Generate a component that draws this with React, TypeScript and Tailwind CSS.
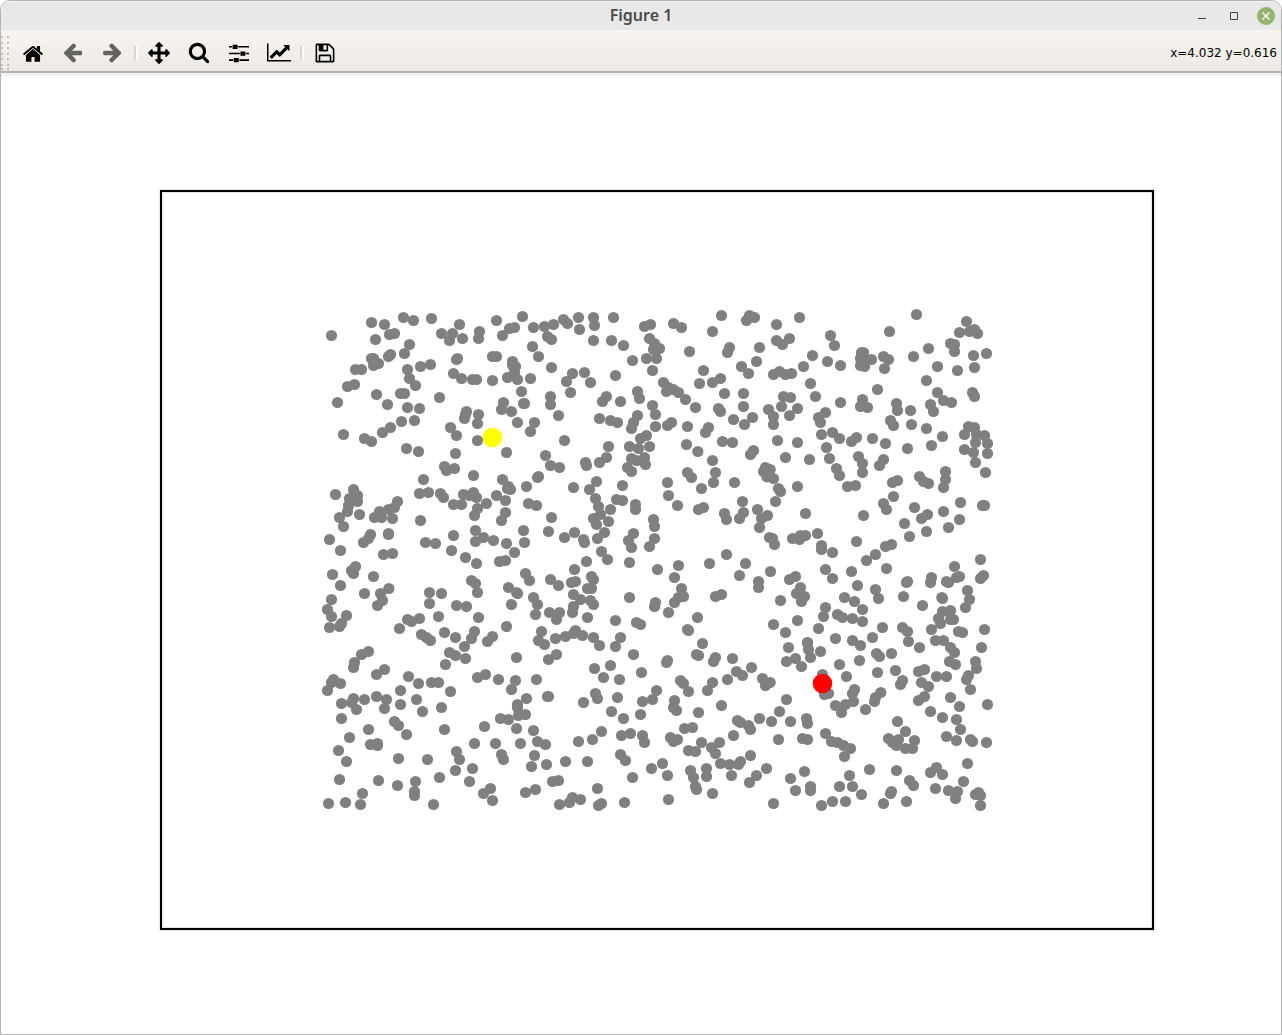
import React from 'react';

type IconProps = { d: string; box: string; className: string };

const HOME =
  'M1472 992v480q0 26-19 45t-45 19h-384v-384h-256v384h-384q-26 0-45-19t-19-45v-480q0-1 .5-3t.5-3l575-474 575 474q1 2 1 6zm223-69l-62 74q-8 9-21 11h-3q-13 0-21-7l-692-577-692 577q-12 8-24 7-13-2-21-11l-62-74q-8-10-7-23.5t11-21.5l719-599q32-26 76-26t76 26l244 204v-195q0-14 9-23t23-9h192q14 0 23 9t9 23v408l219 182q10 8 11 21.5t-7 23.5z';
const ARROW =
  'M1664 896v128q0 53-32.5 90.5t-84.5 37.5h-704l293 294q38 36 38 90t-38 90l-75 76q-37 37-90 37-52 0-91-37l-651-652q-37-37-37-90 0-52 37-91l651-650q38-38 91-38 52 0 90 38l75 74q38 38 38 91t-38 91l-293 293h704q52 0 84.5 37.5t32.5 90.5z';
const MOVE =
  'M1792 896q0 26-19 45l-256 256q-19 19-45 19t-45-19-19-45v-128h-384v384h128q26 0 45 19t19 45-19 45l-256 256q-19 19-45 19t-45-19l-256-256q-19-19-19-45t19-45 45-19h128v-384h-384v128q0 26-19 45t-45 19-45-19l-256-256q-19-19-19-45t19-45l256-256q19-19 45-19t45 19 19 45v128h384v-384h-128q-26 0-45-19t-19-45 19-45l256-256q19-19 45-19t45 19l256 256q19 19 19 45t-19 45-45 19h-128v384h384v-128q0-26 19-45t45-19 45 19l256 256q19 19 19 45z';
const SEARCH =
  'M1216 832q0-185-131.5-316.5t-316.5-131.5-316.5 131.5-131.5 316.5 131.5 316.5 316.5 131.5 316.5-131.5 131.5-316.5zm512 832q0 52-38 90t-90 38q-54 0-90-38l-343-342q-179 124-399 124-143 0-273.5-55.5t-225-150-150-225-55.5-273.5 55.5-273.5 150-225 225-150 273.5-55.5 273.5 55.5 225 150 150 225 55.5 273.5q0 220-124 399l343 343q37 37 37 90z';
const SLIDERS =
  'M0 3h3v1.6H0zM3.6 1.7h5v4.3h-5zM9.2 3H20v1.6H9.2zM0 9.7h10.8v1.6H0zM11.4 8.4h5v4.3h-5zM17 9.7h3v1.6h-3zM0 16.3h4.2v1.6H0zM4.8 15h5v4.3h-5zM10.4 16.3H20v1.6h-9.6z';
const CHART =
  'M2048 1536v128h-2048v-1536h128v1408h1920zm-128-1248v435q0 21-19.5 29.5t-35.5-7.5l-121-121-633 633q-10 10-23 10t-23-10l-233-233-416 416-192-192 585-585q10-10 23-10t23 10l233 233 464-464-121-121q-16-16-7.5-35.5t29.5-19.5h435q14 0 23 9t9 23z';
const SAVE =
  'M512 1536h768v-384h-768v384zm896 0h128v-896q0-14-10-38.5t-20-34.5l-281-281q-10-10-34-20t-39-10v416q0 40-28 68t-68 28h-576q-40 0-68-28t-28-68v-416h-128v1280h128v-416q0-40 28-68t68-28h832q40 0 68 28t28 68v416zm-384-928v-320q0-13-9.5-22.5t-22.5-9.5h-192q-13 0-22.5 9.5t-9.5 22.5v320q0 13 9.5 22.5t22.5 9.5h192q13 0 22.5-9.5t9.5-22.5zm640 32v928q0 40-28 68t-68 28h-1344q-40 0-68-28t-28-68v-1344q0-40 28-68t68-28h928q40 0 88 20t76 48l280 280q28 28 48 76t20 88z';

function Icon({ d, box, className }: IconProps) {
  return (
    <svg viewBox={box} className={className} fill="currentColor" aria-hidden="true">
      <path d={d} />
    </svg>
  );
}

function ToolButton({
  label,
  disabled = false,
  ...icon
}: IconProps & { label: string; disabled?: boolean }) {
  return (
    <button
      type="button"
      aria-label={label}
      title={label}
      disabled={disabled}
      className="flex h-10 w-10 items-center justify-center text-black disabled:text-[#656361]"
    >
      <Icon {...icon} />
    </button>
  );
}

function Separator() {
  return (
    <div className="flex w-[6px] justify-center">
      <span className="h-[14px] w-[2px] bg-[#d8d5d0]" />
      <span className="h-[14px] w-[2px] bg-white" />
    </div>
  );
}

// Samples are grouped in tiles; "x,y" pairs count thirds of a unit from the tile's origin.
const TILES: { x: number; y: number; points: string }[] = [
  {
    x: 315,
    y: 300,
    points:
      '49,106 169,67 208,73 181,118 265,52 295,61 349,55 223,103 238,100 283,133 268,160 379,100 412,100 403,121 442,115 433,73 493,94 490,115 544,61 562,106 583,85 598,82 622,49 655,82 652,139 670,169 169,175 175,196 190,190 175,175 220,169 226,163 121,208 139,208 97,259 118,253 67,307 277,208 283,235 301,256 316,199 346,193 184,283 217,313 256,280 268,280 277,322 313,325 373,292 85,403 148,415 169,424 202,397 226,382 259,364 298,361 274,445 310,454 424,178 427,175 415,220 439,235 472,238 484,238 532,169 544,169 532,241 592,184 592,195 601,199 598,217 577,232 607,238 646,235 619,274 625,310 628,310 565,307 559,328 589,334 607,367 658,367 646,394 454,334 451,343 448,355 490,343 487,370 406,382 424,406 487,421 421,460 388,499 394,511 418,505 475,526 574,457 670,529 667,532',
  },
  {
    x: 540,
    y: 300,
    points:
      '13,79 40,73 70,58 82,70 115,52 118,88 160,52 163,76 220,52 22,109 34,118 160,121 214,121 250,136 277,181 319,175 349,175 328,115 343,130 340,148 358,145 313,79 331,73 400,70 424,82 544,46 517,94 448,154 337,211 568,142 562,157 628,46 619,61 643,52 658,142 649,184 34,202 97,220 133,217 79,244 151,247 91,277 226,226 490,211 478,250 517,247 541,235 604,199 625,220 370,247 385,262 379,274 400,268 415,277 436,298 466,322 553,280 610,280 610,319 535,325 541,334 31,289 31,313 55,346 187,304 199,289 241,304 292,274 298,295 337,316 346,343 178,355 211,361 232,367 292,346 280,367 274,385 346,379 382,376 394,367 442,379 319,406 301,415 580,358 613,373 637,352 505,382 496,397 685,328 73,421 547,424 577,427 439,433 473,454 205,439 199,472 178,487 268,439 295,445 328,439 16,466 31,496 58,502 136,487 139,496 640,451 631,463 517,481 274,475 289,481 313,472 316,493 310,484 262,502 274,514 442,517 454,532 526,517 676,502 670,514 690,508 680,530 700,535',
  },
  {
    x: 765,
    y: 300,
    points:
      '34,73 103,52 34,121 73,115 52,133 196,106 208,136 142,166 115,199 187,184 226,196 373,94 454,43 445,169 490,145 355,169 370,178 358,205 319,178 289,157 295,157 286,175 292,180 286,196 298,199 604,64 583,97 613,94 628,88 637,100 556,130 568,133 568,154 625,166 664,160 628,202 577,211 517,199 484,241 25,223 43,214 61,223 79,220 136,250 151,289 55,289 76,292 49,319 97,325 73,346 25,349 25,373 337,268 226,307 292,298 286,319 307,322 181,337 160,352 166,367 394,310 397,331 436,331 376,361 385,376 439,373 484,385 496,313 505,334 517,277 535,301 559,307 622,277 628,289 169,403 202,397 223,415 259,424 274,412 322,415 361,430 427,445 499,436 532,409 37,421 97,427 184,442 193,475 61,472 133,478 280,469 292,490 292,517 355,478 343,496 214,505 223,526 610,379 628,382 598,403 634,403 658,406 631,427 667,430 598,448 625,457 667,460 631,487 661,517 463,529 541,514',
  },
  {
    x: 315,
    y: 475,
    points:
      '325,13 562,13 313,55 340,52 376,55 385,67 445,58 475,52 463,61 484,67 415,88 439,88 61,58 115,43 103,70 127,61 127,79 100,91 97,109 73,127 133,118 85,154 247,79 238,97 220,103 193,109 178,127 199,127 232,130 316,136 487,100 478,121 514,85 544,61 571,76 577,40 586,43 580,34 634,34 640,85 664,91 571,112 559,136 166,178 160,190 145,202 220,175 220,178 43,193 76,226 205,238 232,235 331,202 361,205 415,181 409,226 481,166 481,199 505,187 535,196 451,247 484,265 574,205 628,202 625,166 598,232 553,259 571,256 52,298 121,274 109,286 115,295 175,304 76,331 148,355 221,340 196,355 202,376 187,391 49,373 37,403 49,424 94,421 43,457 79,445 73,454 343,352 343,385 379,355 469,316 481,325 487,352 424,391 454,394 253,460 277,433 289,439 313,430 370,424 490,427 388,472 421,487 478,469 469,490 319,478 334,487 346,496 532,484 517,499 574,454 589,388 580,337 604,352 607,355 631,295 643,316 655,367 667,388 661,418 679,469 670,496',
  },
  {
    x: 540,
    y: 475,
    points:
      '169,19 148,43 100,37 166,70 175,94 181,118 211,103 229,73 247,76 247,31 286,88 286,103 160,130 169,148 205,139 193,172 172,190 103,172 73,187 130,193 133,202 34,127 25,169 280,175 265,196 274,217 184,229 202,253 268,262 139,259 103,283 31,313 55,331 94,322 106,319 154,304 160,313 142,340 154,340 100,358 121,373 151,376 160,388 100,394 97,412 142,427 28,412 58,412 49,433 340,133 343,154 343,190 328,214 352,283 268,367 346,382 343,394 415,271 403,307 424,340 430,364 415,367 403,382 385,412 226,436 289,442 301,448 382,22 385,61 412,91 484,40 520,22 583,22 475,103 490,97 607,79 553,115 559,133 598,130 610,112 652,103 682,121 664,130 658,157 508,265 559,238 616,265 598,301 526,364 544,358 655,319 655,337 472,427 442,463 445,466 487,505 106,466 127,481 100,475 76,484 46,490 160,487 241,487',
  },
  {
    x: 765,
    y: 475,
    points:
      '40,40 46,49 97,34 31,79 121,115 247,34 271,31 382,22 397,16 385,64 355,85 364,103 295,121 475,19 490,25 541,13 535,37 448,97 487,118 469,130 535,109 586,82 652,91 658,91 583,133 550,157 484,169 418,145 433,184 13,187 22,190 28,208 82,190 106,181 103,193 121,181 157,175 169,211 169,223 202,232 274,199 361,214 379,208 331,238 304,256 364,280 646,253 568,274 16,289 181,283 202,310 259,289 277,331 73,313 91,304 106,337 94,355 118,364 109,379 46,376 331,343 340,370 427,319 424,322 499,307 496,322 544,319 550,322 574,307 583,304 646,310 655,301 607,346 613,373 601,397 415,364 472,391 530,367 532,370 238,367 268,379 292,403 181,397 175,424 217,418 232,427 262,430 292,439 160,460 97,436 25,448 61,472 352,457 412,457 427,469 430,499 532,409 556,406 520,430 526,445 556,433 565,433 499,463 580,469 592,472 658,463 511,496 535,496 322,487 262,496 211,490 127,502',
  },
  {
    x: 315,
    y: 640,
    points:
      '448,19 403,37 421,46 451,55 391,73 604,52 160,34 139,43 118,67 115,82 208,88 184,103 280,109 310,130 55,118 49,127 76,130 37,151 79,190 115,175 109,187 124,208 148,178 184,169 214,178 208,205 256,151 256,193 349,127 370,127 406,154 304,178 322,214 379,202 487,112 511,103 550,118 601,121 589,148 664,118 634,175 607,193 607,202 610,226 631,223 556,235 580,238 604,265 79,235 160,268 103,292 238,244 250,256 274,283 388,268 508,259 655,271 166,313 187,310 187,316 70,331 94,364 250,355 337,358 424,334 433,358 478,310 541,310 616,310 667,304 559,343 565,358 421,391 472,385 463,424 373,412 301,424 658,346 649,379 73,418 190,421 247,436 142,460 136,493 91,487 40,490 298,454 298,466 355,493 505,460 526,445 532,481 631,457 661,448',
  },
  {
    x: 540,
    y: 640,
    points:
      '13,13 178,16 226,19 49,43 25,58 280,43 211,76 163,85 190,112 238,118 304,97 382,61 379,67 469,43 475,46 526,52 520,64 577,55 22,169 25,169 130,187 166,160 172,175 232,172 214,214 250,235 349,151 337,178 307,184 301,223 421,121 430,130 445,154 517,127 502,151 562,118 589,94 607,106 634,82 667,115 676,136 690,127 403,181 400,202 409,211 475,217 544,196 184,274 157,298 115,304 16,313 244,286 271,280 307,286 313,307 433,265 457,262 391,292 400,304 412,298 592,241 601,247 625,256 631,268 658,235 580,286 538,307 484,307 514,322 526,340 445,331 466,334 19,373 76,364 142,364 241,343 256,361 277,412 334,385 367,370 382,406 451,391 460,412 466,439 469,448 499,385 499,409 541,370 568,373 601,364 595,373 631,346 574,406 649,406 628,427 679,385 517,460 37,424 55,421 172,445 97,472 121,478 88,487 58,493 175,496 184,490 253,487 385,478',
  },
  {
    x: 765,
    y: 640,
    points:
      '127,8 130,28 136,52 166,34 70,22 64,64 91,55 109,79 223,73 283,61 286,16 334,40 343,49 379,40 463,22 556,22 568,37 553,64 571,73 649,22 631,64 634,85 610,106 604,118 616,148 244,109 337,97 391,91 412,121 406,133 460,94 478,88 514,109 544,109 469,127 490,139 172,103 178,163 190,160 64,178 43,214 19,244 76,244 268,148 262,160 265,184 241,193 211,196 229,217 347,157 331,172 328,184 301,208 460,181 478,169 556,172 583,199 667,193 496,214 532,232 574,238 586,268 124,235 127,250 397,244 421,274 40,298 112,295 127,298 181,280 199,304 217,307 235,316 256,325 238,349 370,295 400,298 382,307 394,316 421,325 442,325 448,301 544,289 574,301 616,298 622,304 664,307 118,394 76,415 91,451 136,439 136,451 313,388 394,391 253,406 223,439 262,439 289,463 607,370 514,382 496,397 532,403 595,424 433,421 445,436 511,445 550,451 577,454 571,475 379,454 376,460 631,463 640,457 646,466 646,496 25,490 169,496 202,484 241,484 355,490 424,484',
  },
];

const SAMPLES = TILES.flatMap((tile) =>
  tile.points.split(' ').map((pair) => {
    const [px, py] = pair.split(',').map(Number);
    return { x: tile.x + (px + 0.5) / 3, y: tile.y + (py + 0.5) / 3 };
  }),
);

function ScatterPlot() {
  return (
    <svg viewBox="1 76 1280 958" className="block w-full flex-1" role="img" aria-label="Scatter plot">
      <rect x="161" y="191" width="992" height="738" fill="white" stroke="black" strokeWidth="2.2" />
      <g fill="#808080">
        {SAMPLES.map((p, i) => (
          <circle key={i} cx={p.x} cy={p.y} r="5.6" />
        ))}
      </g>
      <circle cx="492.5" cy="437.5" r="9.8" fill="#ffff00" />
      <circle cx="822.5" cy="683.5" r="9.8" fill="#ff0000" />
    </svg>
  );
}

function TitleBar() {
  return (
    <header className="grid h-[29px] grid-cols-[1fr_auto_1fr] items-center bg-[#e8e8e8] shadow-[inset_0_1px_0_#f4f4f4]">
      <span />
      <h1 className="pb-[2px] font-['Noto_Sans','Open_Sans',sans-serif] text-base leading-6 font-semibold text-[#484848]">
        Figure 1
      </h1>
      <div className="flex items-center justify-end gap-[14px] pr-[6px] text-[#3e3e3e]">
        <button type="button" aria-label="Minimize" className="flex h-[18px] w-[18px] items-center justify-center">
          <svg viewBox="0 0 8 8" className="h-2 w-2" aria-hidden="true">
            <path d="M0 6h8v1H0z" fill="currentColor" />
          </svg>
        </button>
        <button type="button" aria-label="Maximize" className="flex h-[18px] w-[18px] items-center justify-center">
          <svg viewBox="0 0 8 8" className="h-2 w-2" aria-hidden="true">
            <path d="M.5.5h7v7h-7z" fill="none" stroke="currentColor" />
          </svg>
        </button>
        <button
          type="button"
          aria-label="Close"
          className="flex h-[18px] w-[18px] items-center justify-center rounded-full bg-[#92b372] text-white"
        >
          <svg viewBox="0 0 8 8" className="h-2 w-2" aria-hidden="true">
            <path d="M.5.5l7 7M7.5.5l-7 7" fill="none" stroke="currentColor" strokeWidth="1.3" />
          </svg>
        </button>
      </div>
    </header>
  );
}

function Toolbar() {
  return (
    <div
      role="toolbar"
      aria-label="Navigation"
      className="flex h-[43px] items-center border-b-2 border-[#b7b3ac] bg-linear-to-b from-[#f8f5f0] to-[#edeae5] pt-1 pr-1"
    >
      <svg viewBox="0 0 12 36" className="h-9 w-3" fill="#c2bfba" aria-hidden="true">
        {[1, 7, 12, 18, 23, 29, 33].map((y) => (
          <g key={y}>
            <rect x="0" y={y} width="2" height="2" />
            <rect x="6" y={y} width="2" height="2" />
          </g>
        ))}
      </svg>
      <ToolButton label="Home" d={HOME} box="0 -64 1792 1792" className="h-[22px] w-[22px]" />
      <ToolButton label="Back" disabled d={ARROW} box="32 64 1792 1792" className="h-[22px] w-[22px]" />
      <ToolButton label="Forward" disabled d={ARROW} box="-32 64 1792 1792" className="h-[22px] w-[22px] -scale-x-100" />
      <Separator />
      <ToolButton label="Pan" d={MOVE} box="0 0 1792 1792" className="h-[22px] w-[22px]" />
      <ToolButton label="Zoom" d={SEARCH} box="0 64 1792 1792" className="h-[22px] w-[22px]" />
      <ToolButton label="Subplots" d={SLIDERS} box="0 0 20 20" className="h-5 w-5" />
      <ToolButton label="Customize" d={CHART} box="0 0 2048 1792" className="h-[21px] w-6" />
      <Separator />
      <ToolButton label="Save" d={SAVE} box="0 0 1792 1792" className="h-[22px] w-[22px]" />
      <output className="ml-auto font-['DejaVu_Sans',sans-serif] text-xs text-black">x=4.032 y=0.616</output>
    </div>
  );
}

export default function App() {
  return (
    <div className="bg-white">
      <main className="flex min-h-screen flex-col overflow-hidden rounded-t-[10px] border border-[#b4b4b4] bg-white">
        <TitleBar />
        <Toolbar />
        <div className="h-[3px] bg-[#f5f3f0]" />
        <ScatterPlot />
      </main>
    </div>
  );
}
